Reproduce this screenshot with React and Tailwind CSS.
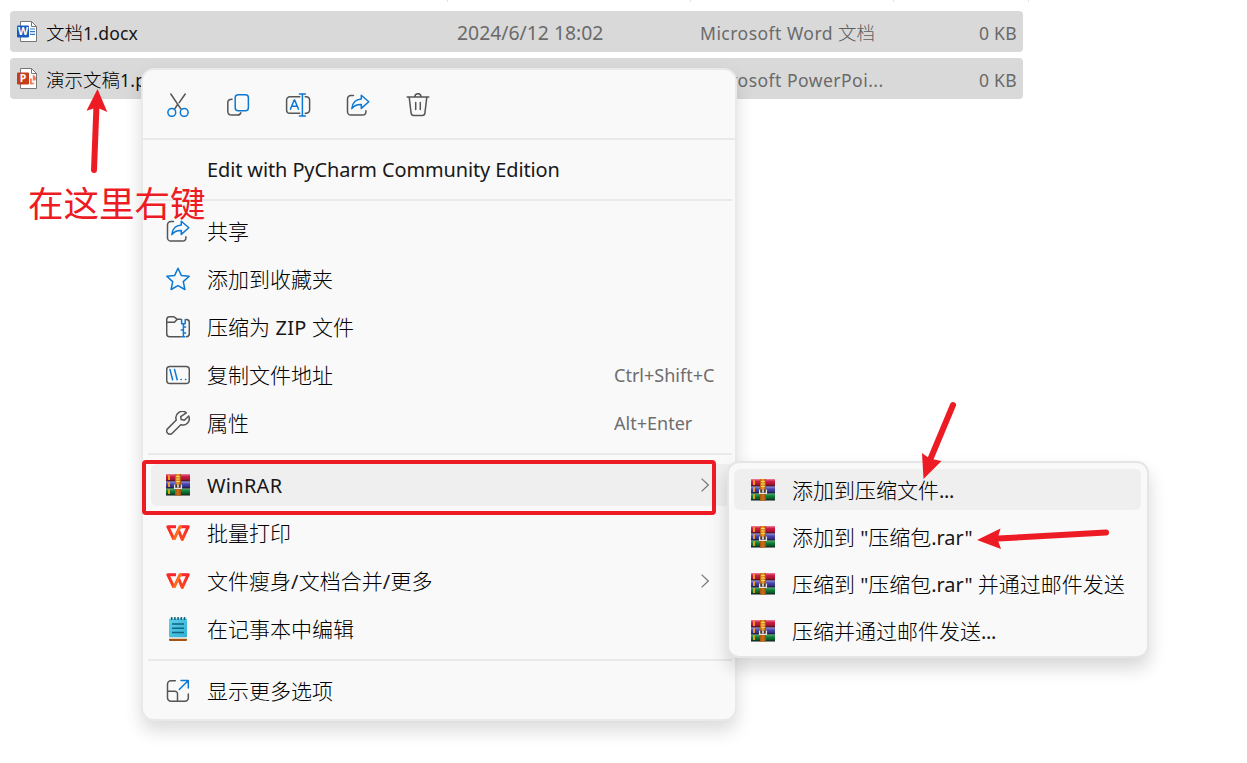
import React from "react";

const INK = "#555";
const BLUE = "#0a78d4";

/* Wraps the Latin runs of a mixed label so they can be sized against the CJK glyphs. */
function Label({ children, tight = "tracking-normal" }) {
  const parts = String(children).split(/([\u3400-\u9fff]+)/).filter(Boolean);
  return (
    <span className="whitespace-pre">
      {parts.map((p, i) =>
        /[\u3400-\u9fff]/.test(p) ? (
          <span key={i}>{p}</span>
        ) : (
          <span key={i} className={"text-[0.95em] font-normal opacity-90 " + tight}>{p}</span>
        )
      )}
    </span>
  );
}

function Svg({ children, box = "0 0 24 24", className = "h-6 w-6" }) {
  return (
    <svg viewBox={box} className={className + " shrink-0"} fill="none" stroke={INK} strokeWidth="1.5" strokeLinecap="round" strokeLinejoin="round">
      {children}
    </svg>
  );
}

const Cut = () => (
  <Svg>
    <path d="M4.8 1l10 14.8M19.2 1l-6 8.600M11.2 12l-2.4 3.800" />
    <g stroke={BLUE}>
      <circle cx="5.800" cy="19.400" r="3.900" />
      <circle cx="18.200" cy="19.400" r="3.900" />
    </g>
  </Svg>
);
const Copy = () => (
  <Svg>
    <path d="M6 6.200C3 6.200 1.800 7.600 1.800 9.600v8.600c0 2.600 1.400 3.900 4 3.900h5.400c2 0 3.200-.8 3.600-2.400" />
    <rect x="9.200" y="1.700" width="13.200" height="16" rx="3" stroke={BLUE} />
  </Svg>
);
const Rename = () => (
  <Svg className="h-6 w-6 overflow-visible">
    <path d="M13.800 3.700H3.900A3.300 3.300 0 0 0 .6 7v10a3.300 3.300 0 0 0 3.300 3.300h9.900M19.200 3.700h1A3.300 3.300 0 0 1 23.600 7v10a3.300 3.300 0 0 1-3.400 3.300h-1" />
    <g stroke={BLUE}>
      <path d="M4.400 16.200L8.200 7h.5l3.800 9.200M5.700 13.200h5.500" />
      <path d="M16.400 1v22M13.400 1h6M13.400 23h6" />
    </g>
  </Svg>
);
const Share = () => (
  <Svg>
    <path d="M7.500 2.600H4.800a3.300 3.300 0 0 0-3.300 3.300v12.800A3.300 3.300 0 0 0 4.800 22h11.800a3.300 3.300 0 0 0 3.300-3.300v-1" />
    <path stroke={BLUE} d="M15.300 2.200l7.500 6.600-7.500 6.600v-3.900c-4.300-.2-7.300 1.200-9.500 4.100.4-5.500 3.600-9.200 9.500-9.700z" />
  </Svg>
);
const Trash = () => (
  <Svg>
    <path d="M1.200 4h21.600M3.200 4.200l1.900 15.900a2.600 2.600 0 0 0 2.600 2.300h8.600a2.600 2.600 0 0 0 2.600-2.300l1.900-15.900M8.900 3.800a3.100 3.100 0 0 1 6.200 0M9.700 9.500v7M14.300 9.500v7" />
  </Svg>
);
const Star = () => (
  <Svg>
    <path stroke={BLUE} d="M12 1.200l3.300 7.200 7.900.9-5.900 5.300 1.600 7.900-6.900-3.900-6.900 3.900 1.600-7.900L.8 9.300l7.900-.9z" />
  </Svg>
);
const Zip = () => (
  <Svg>
    <path d="M14.500 4.300h-3.300L8.800 2.300a2 2 0 0 0-1.300-.5H3.600A3 3 0 0 0 .7 4.800v14a3 3 0 0 0 3 3h10.800M20.500 4.500a3 3 0 0 1 2.800 3v11.300a3 3 0 0 1-2.800 3M.8 7.300h6.600c.8 0 1.200-.2 1.700-.7l2-2.200" />
    <path stroke={BLUE} d="M17.400 8.700v13M15.600 4.600v4.100h3.600V4.600M17.600 12h2M15.300 15h2M17.600 18h2M15.600 21.800h3.200" />
  </Svg>
);
const CopyPath = () => (
  <Svg>
    <rect x=".7" y="3.500" width="22.600" height="17" rx="3.300" />
    <path stroke={BLUE} d="M4 6.600l2.600 10.200M8.600 6.600l2.600 10.200M15 16.600h.3M19.500 16.600h.3" />
  </Svg>
);
const Wrench = () => (
  <Svg>
    <path d="M20.300 1.800a6.400 6.400 0 0 0-10 7.200L1.700 17.600a3 3 0 0 0 0 4.600 3 3 0 0 0 4.500 0l8.600-8.500a6.400 6.400 0 0 0 7.900-8.700l-4.300 4.200-3.200-.6-.5-3z" />
  </Svg>
);
const More = () => (
  <Svg>
    <path d="M9.300 1.800H5A3.500 3.500 0 0 0 1.500 5.300v13.400A3.500 3.500 0 0 0 5 22.200h14a3.300 3.300 0 0 0 3.300-3.300v-3.800M1.700 12.300h7.200a2.600 2.600 0 0 1 2.600 2.600V22" />
    <path stroke={BLUE} d="M13.300 10.500l9-9M15 1.400h7.300v7.500" />
  </Svg>
);
const Notepad = () => (
  <svg viewBox="0 0 24 24" className="h-6 w-6 shrink-0">
    <defs>
      <linearGradient id="np" x1="0" y1="0" x2="1" y2="1">
        <stop offset="0" stopColor="#62d0ea" />
        <stop offset="1" stopColor="#31b0d4" />
      </linearGradient>
    </defs>
    <rect x="3" y="20" width="18" height="4" rx="1" fill="#a35412" />
    <rect x="3" y="19.800" width="18" height="2" fill="#f3efe9" />
    <rect x="3" y="1.500" width="18" height="18.800" rx="1" fill="url(#np)" />
    <path d="M5.700 0v3M8.900 0v3M12.100 0v3M15.300 0v3M18.500 0v3" stroke="#13607c" strokeWidth="1.500" />
    <path d="M6 7h12M6 11.300h12M6 15.600h12" stroke="#0c6680" strokeWidth="1.500" />
  </svg>
);
const Wps = () => (
  <svg viewBox="0 0 24 24" className="h-6 w-6 shrink-0" fill="none" strokeWidth="3" strokeLinejoin="round">
    <defs>
      <linearGradient id="wps" gradientUnits="userSpaceOnUse" x1="0" y1="4" x2="0" y2="20">
        <stop offset="0" stopColor="#f5222d" />
        <stop offset="1" stopColor="#ff4a1c" />
      </linearGradient>
    </defs>
    <path d="M10 5.700H1.800L8 18.500M12.800 10l3.400 8.500L22.200 5.700H14" stroke="url(#wps)" />
    <path d="M8 18.500L14 5.700h2" stroke="#ff6a20" />
  </svg>
);
const Rar = () => (
  <svg viewBox="0 0 24 22" className="h-[22px] w-6 shrink-0">
    <defs>
      <linearGradient id="r1" x1="0" y1="0" x2="0" y2="1"><stop offset="0" stopColor="#f08aa0" /><stop offset=".3" stopColor="#d01f48" /><stop offset="1" stopColor="#8b0f22" /></linearGradient>
      <linearGradient id="r2" x1="0" y1="0" x2="0" y2="1"><stop offset="0" stopColor="#a09be0" /><stop offset=".4" stopColor="#4a47ae" /><stop offset="1" stopColor="#24226c" /></linearGradient>
      <linearGradient id="r3" x1="0" y1="0" x2="0" y2="1"><stop offset="0" stopColor="#5cb37a" /><stop offset=".4" stopColor="#108038" /><stop offset="1" stopColor="#06441c" /></linearGradient>
      <linearGradient id="r4" x1="0" y1="0" x2="1" y2="0"><stop offset="0" stopColor="#b45f0c" /><stop offset=".5" stopColor="#f2a02c" /><stop offset="1" stopColor="#a04c08" /></linearGradient>
    </defs>
    <rect y="0" width="24" height="7.200" fill="url(#r1)" />
    <rect y="7.200" width="24" height="7" fill="url(#r2)" />
    <rect y="14.200" width="24" height="7" fill="url(#r3)" />
    <path d="M0 7h24M0 14h24M0 21h24" stroke="#1e1428" strokeWidth=".8" />
    <path d="M3 1.300v4.800M3 8.300v4.800M3 15.300v4.800" stroke="#f7a51c" strokeWidth="1.800" />
    <rect x="9" y="0" width="6" height="21.500" fill="url(#r4)" />
    <rect x="9" y="14.500" width="6" height="7" fill="#a8480c" opacity=".55" />
    <path d="M10 2.500h4M10 5h4M10 7.500h4" stroke="#ffe070" strokeWidth=".8" />
    <path d="M8.600 10.500v3.800h6.800v-3.800" fill="#4a342a" stroke="#e4e4e4" strokeWidth="1.300" />
    <rect x="11.300" y="10.500" width="1.400" height="3" fill="#fff" />
  </svg>
);
const Doc = ({ color, accent, letter, ppt }) => (
  <svg viewBox="0 0 20 23" className="h-[23px] w-5 shrink-0">
    <path d="M3.500 1.500h11l5 5v15h-16z" fill="#fff" stroke="#777" strokeWidth="1" />
    <path d="M14.500 1.500v5h5" fill="none" stroke="#777" strokeWidth="1" />
    {ppt ? (
      <path d="M13 8.500v3h1.800v4.200h2.900a4 4 0 0 1-4.700 1.600zM15.800 7.800a4 4 0 0 1 2.600 5.800h-2.600z" fill={accent} />
    ) : (
      <path d="M13 9h5M13 11.700h5M13 14.400h5" stroke={accent} strokeWidth="1.200" />
    )}
    <rect x="0" y="5.500" width="12" height="12" rx="1" fill={color} />
    <text x="6" y="15.200" textAnchor="middle" fontSize="10.500" fontWeight="700" fill="#fff" fontFamily="Noto Sans, sans-serif">{letter}</text>
  </svg>
);
const Chevron = () => (
  <svg viewBox="0 0 8 14" className="h-[14px] w-2" fill="none" stroke="#777" strokeWidth="1.200">
    <path d="M.6.6L7.300 7 .6 13.400" />
  </svg>
);

function FileRow({ icon, name, date, type }) {
  return (
    <div className="flex h-[41px] w-[1013px] items-center rounded-sm bg-[#d9d9d9] pr-1.5 pl-[7px] text-[18.500px] text-[#5e5e5e]">
      {icon}
      <div className="w-[411px] pt-0.5 pl-[9px] text-black"><Label tight="tracking-[0.2px]">{name}</Label></div>
      <div className="w-[243px] pt-0.5 pl-[9px] text-[20.400px]"><Label>{date}</Label></div>
      <div className="flex-1 pt-0.5 pl-[9px]"><Label tight="tracking-[0.450px]">{type}</Label></div>
      <div className="pt-0.5"><Label tight="tracking-[0.3px]">0 KB</Label></div>
    </div>
  );
}

function Item({ icon, text, hint, arrow, active }) {
  return (
    <div className="flex h-12 items-center pl-[7px]">
      <div className={"flex h-[42px] w-full items-center rounded-md pl-[15px] " + (active ? "bg-[#efefef]" : "")}>
        {icon}
        <div className="w-[424px] pt-0.5 pl-[17px]"><Label tight="tracking-[0.3px]">{text}</Label></div>
        {hint && <div className="text-[19px] whitespace-nowrap text-[#606060]"><Label>{hint}</Label></div>}
        {arrow && <div className="pl-[87px]"><Chevron /></div>}
      </div>
    </div>
  );
}

const Rule = () => <div className="mr-0.5 ml-1 h-0.5 bg-[#e9e9e9]" />;

const archive = ["添加到压缩文件...", "添加到 \"压缩包.rar\"", "压缩到 \"压缩包.rar\" 并通过邮件发送", "压缩并通过邮件发送..."];

export default function App() {
  return (
    <div className="relative h-[763px] w-[1247px] overflow-hidden bg-white font-['Noto_Sans','Noto_Sans_CJK_SC',sans-serif] font-light">
      <div className="flex h-[11px] pl-[447px]">
        <div className="h-0.5 w-[243px] border-l border-[#e2e2e2]" />
        <div className="h-0.5 w-[203px] border-l border-[#e2e2e2]" />
        <div className="h-0.5 w-[136px] border-x border-[#e2e2e2]" />
      </div>
      <div className="flex flex-col gap-1.5 pl-2.5">
        <FileRow icon={<Doc color="#185abd" accent="#2b7cd3" letter="W" />} name="文档1.docx" date="2024/6/12 18:02" type="Microsoft Word 文档" />
        <FileRow icon={<Doc color="#c43e1c" accent="#f07a58" letter="P" ppt />} name="演示文稿1.pptx" date="2024/6/12 18:02" type="Microsoft PowerPoi..." />
      </div>

      <div className="absolute top-[68px] left-[141px] flex h-[653px] w-[596px] flex-col rounded-[13px] border-2 border-[#e9e9e9] bg-[#f9f9f9] p-px text-[21px] text-black shadow-[0_10px_18px_rgba(0,0,0,0.14)]">
        <div className="flex h-[67px] shrink-0 items-center gap-9 pl-[22px]">
          <Cut /><Copy /><Rename /><Share /><Trash />
        </div>
        <div className="-mx-px h-0.5 bg-[#e9e9e9]" />
        <div className="flex h-[59px] items-center pl-[63px]"><Label tight="tracking-[-0.1px]">Edit with PyCharm Community Edition</Label></div>
        <Rule />
        <div className="py-1.5">
          <Item icon={<Share />} text="共享" />
          <Item icon={<Star />} text="添加到收藏夹" />
          <Item icon={<Zip />} text="压缩为 ZIP 文件" />
          <Item icon={<CopyPath />} text="复制文件地址" hint="Ctrl+Shift+C" />
          <Item icon={<Wrench />} text="属性" hint="Alt+Enter" />
        </div>
        <Rule />
        <div className="py-1.5">
          <Item icon={<Rar />} text="WinRAR" arrow active />
          <Item icon={<Wps />} text="批量打印" />
          <Item icon={<Wps />} text="文件瘦身/文档合并/更多" arrow />
          <Item icon={<Notepad />} text="在记事本中编辑" />
        </div>
        <Rule />
        <div className="pt-1.5"><Item icon={<More />} text="显示更多选项" /></div>
      </div>

      <div className="absolute top-[461px] left-[727px] flex h-[197px] w-[422px] flex-col gap-1.5 rounded-xl border-2 border-[#e5e5e5] bg-[#f9f9f9] pr-1.5 pl-[5px] pt-1.5 text-[21px] text-black shadow-[0_10px_18px_rgba(0,0,0,0.16)]">
        {archive.map((t, i) => (
          <div key={t} className={"flex h-[41px] items-center rounded-md pl-[17px] " + (i === 0 ? "bg-[#efefef]" : "")}>
            <Rar />
            <div className="pt-0.5 pl-[17px]"><Label tight={t.includes("rar") ? "tracking-[-0.050px]" : "tracking-[-0.3px]"}>{t}</Label></div>
          </div>
        ))}
      </div>

      <div className="absolute top-[460px] left-[142px] h-[55px] w-[574px] rounded-sm border-4 border-[#ed1c24]" />
      <div className="absolute top-[177px] left-[28px] text-[35.500px] leading-[52px] font-normal whitespace-nowrap text-[#ed1c24]">在这里右键</div>
      <svg className="absolute inset-0" width="1247" height="763" stroke="#ed1c24" strokeWidth="6" strokeLinecap="round" fill="#ed1c24">
        <path d="M94 170L96.500 105M953 405L930 460M1106 532.500L998 538.500" fill="none" />
        <path d="M97.500 89L107.300 112 96.800 107.500 86.500 110.800zM923.500 479L922 453 929.500 458.500 941.500 461zM977 540L1000.500 528.500 997.500 539 1001 549z" stroke="none" />
      </svg>
    </div>
  );
}
